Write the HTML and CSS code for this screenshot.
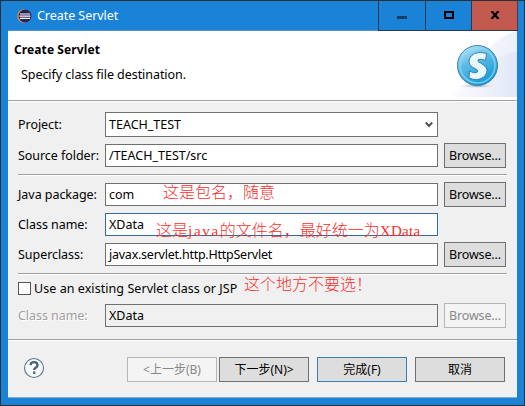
FILE: index.html
```html
<!DOCTYPE html>
<html lang="zh-CN">
<head>
<meta charset="utf-8">
<title>Create Servlet</title>
<link rel="stylesheet" href="styles.css">
</head>
<body>
<div class="window">
  <div class="titlebar">
    <svg class="app-icon" width="15" height="14" viewBox="0 0 15 14">
      <circle cx="7" cy="7" r="6.7" fill="#f0973a"/>
      <circle cx="8" cy="7" r="6.5" fill="#2b2259"/>
      <path d="M3 5h10M2.500 7.2h11M3 9.4h10" stroke="#fff" stroke-width="1.2"/>
    </svg>
    <span class="title">Create Servlet</span>
    <div class="controls">
      <div class="control min"><svg width="10" height="3"><path d="M0 0h10v3H0z" fill="#123f68"/></svg></div>
      <div class="control max"><svg width="10" height="8"><path d="M1 1h8v6H1z" fill="none" stroke="#000" stroke-width="2"/></svg></div>
      <div class="control close"><svg width="10" height="8" viewBox="0 0 10 8"><path d="M1.5 0L8.5 8M8.5 0L1.5 8" stroke="#000" stroke-width="2.2"/></svg></div>
    </div>
  </div>
  <div class="client">
    <div class="header">
      <div class="heading">Create Servlet</div>
      <div class="sub">Specify class file destination.</div>
      <svg class="banner" width="75" height="66" viewBox="0 0 75 66">
        <defs>
          <linearGradient id="wash" x1="0" x2="1"><stop offset="0" stop-color="#fff"/><stop offset="1" stop-color="#dfe5f6"/></linearGradient>
          <linearGradient id="ball" x1="0" y1="0" x2=".5" y2="1"><stop offset="0" stop-color="#d3f0fb"/><stop offset=".45" stop-color="#62bde6"/><stop offset="1" stop-color="#159bd5"/></linearGradient>
          <radialGradient id="shade"><stop offset="0" stop-color="#9c9aa8"/><stop offset="1" stop-color="#fff" stop-opacity="0"/></radialGradient>
        </defs>
        <path d="M75 0Q55 6 43 22Q28 54 4 66H75z" fill="url(#wash)" opacity=".6"/>
        <path d="M75 21Q50 24 36 44Q22 60 4 66H75z" fill="url(#wash)" opacity=".8"/>
        <ellipse cx="35" cy="55" rx="22" ry="2.5" fill="url(#shade)"/>
        <circle cx="35.500" cy="34.500" r="20" fill="url(#ball)" stroke="#3a7fb2" stroke-width="1"/>
        <circle cx="35.500" cy="34.500" r="17.500" fill="none" stroke="#8fdcf5" stroke-width="1.6" opacity=".7"/>
        <path d="M44.500 22.500Q38 20 32.500 22.500Q27 25.500 27 31Q27.500 35.500 33 37.500Q36.500 39 35.500 41Q33 43 27.500 40L27 47Q35 50.500 41 46.500Q46.500 42 44.500 37Q42.500 34 38.500 32Q34.500 30.500 36.500 28.500Q39 27.500 43.500 29.500z" fill="#e8f8ff" stroke="#397fb5" stroke-width="1"/>
      </svg>
    </div>
    <div class="form">
      <div class="row r-project"><label>Project:</label><div class="field combo">TEACH_TEST<svg width="8" height="7" viewBox="0 0 8 7"><path d="M.8 1.500L4 5L7.200 1.500" fill="none" stroke="#555" stroke-width="2"/></svg></div></div>
      <div class="row r-source"><label>Source folder:</label><div class="field">/TEACH_TEST/src</div><div class="button">Browse...</div></div>
      <div class="rule"></div>
      <div class="row r-package"><label>Java package:</label><div class="field">com</div><div class="button">Browse...</div></div>
      <div class="row r-class"><label>Class name:</label><div class="field focus">XData</div></div>
      <div class="row r-super"><label>Superclass:</label><div class="field super">javax.servlet.http.HttpServlet</div><div class="button">Browse...</div></div>
      <div class="rule"></div>
      <div class="check-row"><span class="box"></span><span class="check-text">Use an existing Servlet class or JSP</span></div>
      <div class="row r-existing"><label class="off">Class name:</label><div class="field readonly">XData</div><div class="button disabled">Browse...</div></div>
    </div>
    <div class="footer">
      <svg class="help" width="22" height="22" viewBox="0 0 22 22">
        <circle cx="11" cy="11" r="9.500" fill="#f7f9fb" stroke="#60758f" stroke-width="1.100"/>
        <path d="M7.500 8.200Q7.700 5.200 11 5.200Q14.500 5.200 14.500 8.200Q14.500 9.600 12.700 10.700Q11.200 11.600 11.200 13" fill="none" stroke="#4a6080" stroke-width="2.3"/>
        <path d="M10 14.500h2.400v2.400h-2.400z" fill="#4a6080"/>
      </svg>
      <div class="button wide disabled">&lt;上一步(B)</div>
      <div class="button wide">下一步(N)&gt;</div>
      <div class="button wide finish">完成(F)</div>
      <div class="button wide">取消</div>
    </div>
  </div>
  <div class="note note-package">这是包名，随意</div>
  <div class="note note-class">这是<span class="java">java</span>的文件名，最好统一为<span class="latin">XData</span></div>
  <div class="note note-check">这个地方不要选！</div>
</div>
</body>
</html>
```
FILE: styles.css
```css
* { box-sizing: border-box; }
body {
  margin: 0;
  font: 12.5px/20px "Noto Sans", "Noto Sans CJK SC", sans-serif;
  color: #000;
}
.window {
  position: relative;
  width: 525px;
  height: 406px;
  border: 1px solid #2c2f36;
  background: #1a83d8;
  padding: 0 7px 7px;
  overflow: hidden;
  white-space: nowrap;
}
svg { display: block; flex: none; }
.titlebar {
  display: flex;
  height: 30px;
  padding-left: 9px;
  border-bottom: 1px solid #4f91c8;
}
.app-icon { margin-top: 8px; }
.title { margin: 5px 0 0 5px; color: #fff; letter-spacing: -.05px; }
.controls { display: flex; margin: 0 -1px 0 auto; height: 30px; }
.control {
  display: flex;
  width: 46px;
  justify-content: center;
  border-left: 1px solid #26384c;
  border-bottom: 1px solid #26384c;
}
.min { width: 47px; padding-top: 15px; }
.max { padding-top: 10px; }
.close { width: 47px; padding-top: 10px; background: #c25a50; border-right: 1px solid #60343a; }
.client {
  height: 367px;
  background: #f0f0f0;
  border-bottom: 1px solid #87acc9;
}
.header {
  position: relative;
  height: 71px;
  background: #fff;
  border-bottom: 1px solid #fff;
  box-shadow: inset 0 -1px #a0a0a0;
  padding: 9px 0 0 6px;
}
.heading { font-weight: 700; font-size: 12px; letter-spacing: .1px; }
.sub { margin: 5px 0 0 7px; letter-spacing: -.06px; }
.banner { position: absolute; right: 0; top: 0; }
.form { padding: 10px 10px 0; height: 237px; }
.row { display: flex; align-items: center; height: 25px; }
.r-source { margin-top: 6px; }
.r-package { margin-top: 6px; }
.r-class { margin-top: 5px; }
.r-super { margin-top: 5px; }
.r-existing { margin-top: 8px; }
label { width: 87px; letter-spacing: -.05px; }
.off { color: #a0a0a0; text-shadow: 1px 1px #fff; }
.field {
  width: 333px;
  height: 23px;
  margin-right: 6px;
  padding-left: 3px;
  border: 1px solid #707070;
  background: #fff;
  line-height: 21px;
}
.combo { display: flex; height: 25px; line-height: 23px; justify-content: space-between; align-items: center; padding-right: 4px; }
.super { letter-spacing: -.24px; }
.focus { border-color: #336a99; }
.readonly { background: #f0f0f0; }
.button {
  width: 62px;
  height: 25px;
  border: 1px solid #707070;
  background: #ddd;
  text-align: center;
  line-height: 24px;
  letter-spacing: -.15px;
}
.disabled { color: #888; background: #f4f4f4; border-color: #b3b7b7; }
.rule { height: 2px; margin-top: 6px; background: #fff; border-top: 1px solid #a0a0a0; }
.check-row { display: flex; height: 13px; margin-top: 7px; align-items: center; }
.box { width: 13px; height: 13px; background: #fff; border: 1px solid #555; }
.check-text { margin-left: 3px; letter-spacing: .06px; }
.footer {
  display: flex;
  height: 58px;
  padding: 17px 0 0 15px;
  border-top: 1px solid #a0a0a0;
  box-shadow: inset 0 1px #fff;
}
.help { margin-right: 82px; }
.wide { width: 90px; font-size: 12px; letter-spacing: 0; margin-right: 8px; }
.wide.disabled { margin-right: 2px; }
.finish { border-color: #3b7fb0; }
.note {
  position: absolute;
  color: #f5302c;
  font: 300 16px/16px "Noto Sans CJK SC", sans-serif;
}
.note-package { left: 162px; top: 182px; }
.note-class { left: 155px; top: 220px; }
.note-check { left: 243px; top: 274px; }
.java, .latin { font-family: "Liberation Serif", serif; font-size: 15px; }
.java { letter-spacing: 1.7px; }
.latin { letter-spacing: .3px; }
```
